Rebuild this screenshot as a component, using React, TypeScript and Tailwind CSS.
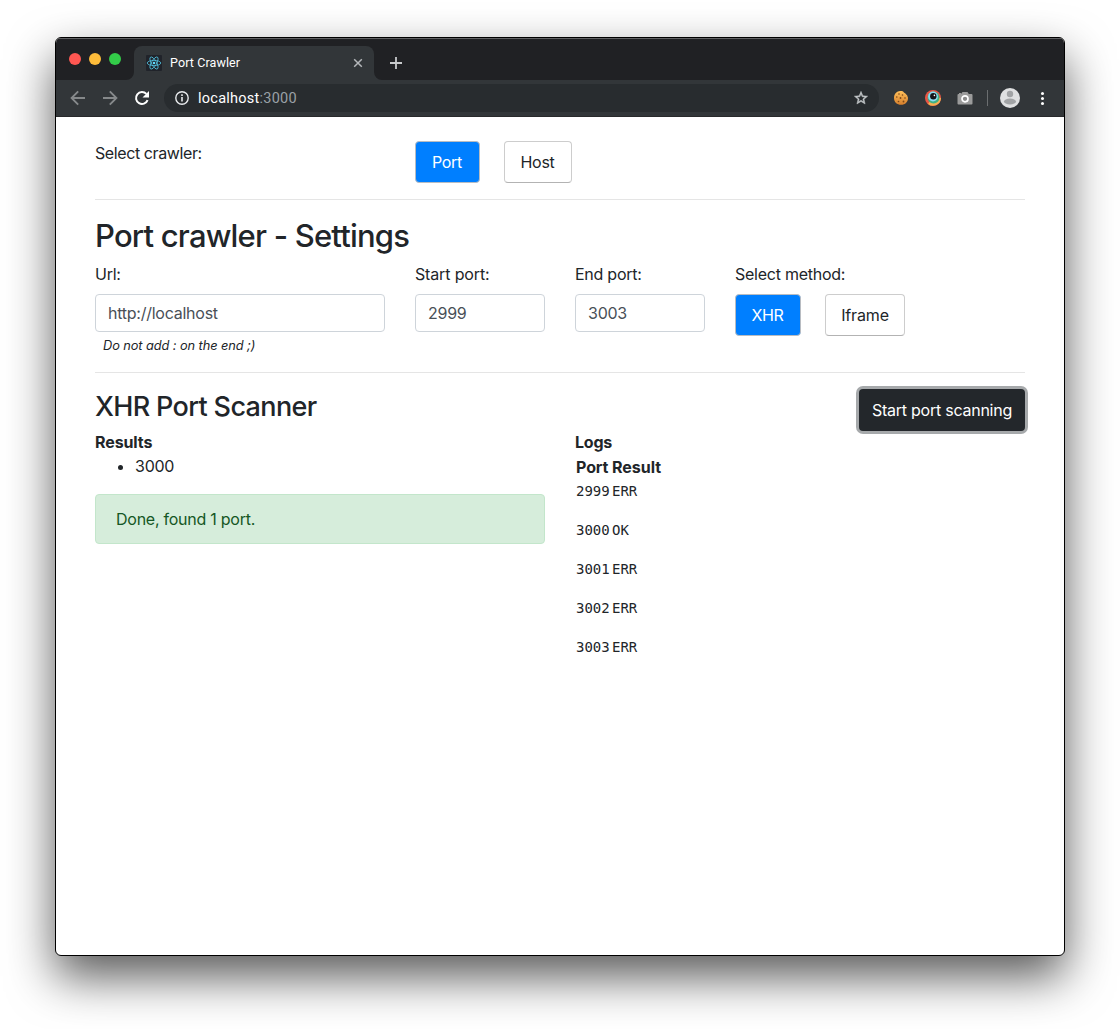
import React from "react";

const CONTENT_FONT = "font-['Inter',sans-serif]";

function Chrome() {
  return (
    <div className="font-['Roboto',sans-serif] text-white">
      <div className="flex h-[42px] items-end border-t border-[#606163] bg-[#202124]">
        <div className="mb-[15px] ml-[13px] flex gap-2">
          <span className="size-3 rounded-full bg-[#ff5752]" />
          <span className="size-3 rounded-full bg-[#febc3a]" />
          <span className="size-3 rounded-full bg-[#33cc49]" />
        </div>
        <svg className="ml-[5px] size-2" viewBox="0 0 8 8" fill="#323639"><path d="M8 0v8H0a8 8 0 0 0 8-8Z" /></svg>
        <div className="flex h-[34px] w-60 items-center rounded-t-lg bg-[#323639] pl-3 pr-[11px]">
          <svg className="size-4" viewBox="0 0 16 16">
            <rect width="16" height="16" rx="1" fill="#20232a" />
            <g fill="none" stroke="#53c1de" strokeWidth=".8">
              <ellipse cx="8" cy="8" rx="6.8" ry="2.6" />
              <ellipse cx="8" cy="8" rx="6.8" ry="2.6" transform="rotate(60 8 8)" />
              <ellipse cx="8" cy="8" rx="6.8" ry="2.6" transform="rotate(120 8 8)" />
            </g>
            <circle cx="8" cy="8" r="1.3" fill="#61dafb" />
          </svg>
          <span className="ml-2 text-[12.5px] leading-4 tracking-[0.1px]">Port Crawler</span>
          <svg className="ml-auto size-[10px]" viewBox="0 0 10 10" stroke="#b4b7ba" strokeWidth="1.5"><path d="M1.2 1.2l7.6 7.6M8.8 1.2L1.2 8.8" /></svg>
        </div>
        <svg className="size-2" viewBox="0 0 8 8" fill="#323639"><path d="M0 0v8h8a8 8 0 0 1-8-8Z" /></svg>
        <svg className="mb-[11px] ml-2 size-3" viewBox="0 0 12 12" stroke="#c8cacc" strokeWidth="1.8"><path d="M6 0v12M0 6h12" /></svg>
      </div>
      <div className="flex h-[37px] items-center border-b border-[#28292b] bg-[#323639] pl-[14px] pr-[15px]">
        <svg className="h-4 w-4" viewBox="0 0 16 16" fill="none" stroke="#85888a" strokeWidth="1.9"><path d="M15 8H2M8.2 1.4L1.6 8l6.6 6.6" /></svg>
        <svg className="ml-4 h-4 w-4" viewBox="0 0 16 16" fill="none" stroke="#85888a" strokeWidth="1.9"><path d="M1 8h13M7.8 1.4L14.4 8l-6.6 6.6" /></svg>
        <svg className="ml-4 h-4 w-4" viewBox="0 0 16 16"><path d="M13.6 10.2A6 6 0 1 1 12.4 3.9" fill="none" stroke="#fff" strokeWidth="2" /><path d="M15 1v6.5H8.5Z" fill="#fff" /></svg>
        <div className="ml-[14px] flex h-7 w-[715px] items-center rounded-full bg-[#282c2f] pl-[11px] pr-[10px]">
          <svg className="size-[14px]" viewBox="0 0 14 14"><circle cx="7" cy="7" r="6.2" fill="none" stroke="#e8eaed" strokeWidth="1.4" /><path d="M7 6v4.5M7 3.3v1.6" stroke="#e8eaed" strokeWidth="1.6" /></svg>
          <span className="ml-[9px] pt-0.5 text-[14.5px] leading-5 tracking-[0.25px]">localhost<span className="text-[#9aa0a6]">:3000</span></span>
          <svg className="ml-auto size-4" viewBox="0 0 24 24" fill="#c3c6c9" stroke="#c3c6c9" strokeWidth=".7"><path d="m22 9.24-7.19-.62L12 2 9.19 8.63 2 9.24l5.46 4.73L5.82 21 12 17.27 18.18 21l-1.63-7.03L22 9.24zM12 15.4l-3.76 2.27 1-4.28-3.32-2.88 4.38-.38L12 6.1l1.71 4.04 4.38.38-3.32 2.88 1 4.28L12 15.4z" /></svg>
        </div>
        <svg className="ml-[14px] size-4" viewBox="0 0 16 16">
          <defs>
            <linearGradient id="cookie" x2="0" y2="1"><stop stopColor="#ffc05a" /><stop offset="1" stopColor="#d67f2c" /></linearGradient>
          </defs>
          <path d="M6 1.2C3 1.8 1 4.5 1 8c0 4 3 6.8 7 6.8 4.5 0 7-3 7-6.8 0-1.2-.6-1.2-.8-2.4-.2-1-1.2-.8-1.6-1.8S11 3 10.5 1.9 7.5.9 6 1.2Z" fill="url(#cookie)" />
          <g fill="#7c4718"><circle cx="6" cy="4" r=".8" /><circle cx="9.5" cy="5" r=".8" /><circle cx="3.8" cy="7" r=".8" /><circle cx="7.5" cy="8" r=".9" /><circle cx="12" cy="8" r=".8" /><circle cx="5.5" cy="11.5" r=".8" /><circle cx="10.5" cy="11.5" r=".9" /></g>
        </svg>
        <svg className="ml-4 size-4" viewBox="0 0 16 16">
          <circle cx="8" cy="8" r="8" fill="#ea5545" /><path d="M3 14a8 8 0 0 0 13-6l-8-1Z" fill="#f4b052" />
          <circle cx="8.5" cy="7.5" r="6" fill="#3fb183" /><circle cx="8" cy="6.5" r="4.9" fill="#8ddcf2" /><circle cx="8.3" cy="6.3" r="3.2" fill="#151519" /><circle cx="9.4" cy="5.4" r=".8" fill="#fff" />
        </svg>
        <svg className="ml-4 size-4" viewBox="0 0 16 16">
          <path d="M5.5 2h5l1.3 2H14.5q1 0 1 1v8.5q0 1-1 1h-13q-1 0-1-1V5q0-1 1-1H2V3h2v1Z" fill="#9b9b9b" /><circle cx="8" cy="8.8" r="3" fill="#8c8c8c" stroke="#fff" strokeWidth="1.7" />
        </svg>
        <span className="ml-[14px] h-4 w-px bg-[#6b6e70]" />
        <svg className="ml-3 size-5" viewBox="0 0 20 20"><circle cx="10" cy="10" r="10" fill="#dfe0e1" /><circle cx="10" cy="6" r="3.2" fill="#a1a3a5" /><ellipse cx="10" cy="13.5" rx="6" ry="3" fill="#a1a3a5" /></svg>
        <svg className="ml-auto h-[14px] w-[14px]" viewBox="0 0 14 14" fill="#fff"><circle cx="7.5" cy="2.5" r="1.5" /><circle cx="7.5" cy="7.5" r="1.5" /><circle cx="7.5" cy="12.5" r="1.5" /></svg>
      </div>
    </div>
  );
}

function Choice({ active, width, children }: { active?: boolean; width: string; children: React.ReactNode }) {
  return (
    <button className={`${width} h-[42px] rounded border pr-px text-center leading-6 tracking-[-0.3px] ${active ? "border-[#b8bcc2] bg-[#007fff] text-white" : "border-[#cdcdcd] border-b-[#b3b3b3] bg-white text-[#212529]"}`}>
      {children}
    </button>
  );
}

const inputClass = "block h-[38px] w-full rounded border border-[#ced4da] bg-white px-3 text-[16px] tracking-[-0.25px] text-[#495057] outline-none";

const logs = [["2999", "ERR"], ["3000", "OK"], ["3001", "ERR"], ["3002", "ERR"], ["3003", "ERR"]];

export default function App() {
  return (
    <div className="h-[1029px] w-[1120px] overflow-hidden bg-white pl-[55px] pt-[37px]">
      <div className="h-[919px] w-[1010px] overflow-hidden rounded-md border border-black bg-white shadow-[0_21px_47px_rgba(0,0,0,0.65)]">
        <Chrome />
        <main className={`${CONTENT_FONT} px-[39px] pt-6 text-[16px] leading-6 tracking-[-0.25px] text-[#212529]`}>
          <section className="flex h-[58px]">
            <div className="w-80 tracking-[-0.4px]">Select crawler:</div>
            <div className="flex gap-6">
              <Choice active width="w-[65px]">Port</Choice>
              <Choice width="w-[68px]">Host</Choice>
            </div>
          </section>
          <hr className="border-[#e5e5e5]" />

          <section className="h-[172px] pt-4">
            <h2 className="h-[46px] text-[31px] font-medium leading-[39px] tracking-[-0.8px]">Port crawler - Settings</h2>
            <div className="flex gap-[30px]">
              <div className="w-[290px]">
                <label className="mb-2 block">Url:</label>
                <input className={inputClass} defaultValue="http://localhost" />
                <small className="block pl-2 pt-1 text-[12.8px] italic leading-5 tracking-[-0.08px]">Do not add : on the end ;)</small>
              </div>
              <div className="w-[130px]">
                <label className="mb-2 block tracking-[-0.15px]">Start port:</label>
                <input className={inputClass} defaultValue="2999" />
              </div>
              <div className="w-[130px]">
                <label className="mb-2 block">End port:</label>
                <input className={inputClass} defaultValue="3003" />
              </div>
              <div>
                <label className="mb-2 block">Select method:</label>
                <div className="flex gap-6">
                  <Choice active width="w-[66px]">XHR</Choice>
                  <Choice width="w-[80px]"><span className="pl-px tracking-[-0.15px]">Iframe</span></Choice>
                </div>
              </div>
            </div>
          </section>
          <hr className="border-[#e5e5e5]" />

          <section className="pt-[15px]">
            <div className="flex h-[42px] justify-between">
              <h3 className="pt-0.5 text-[27px] font-medium leading-[34px] tracking-[-0.65px]">XHR Port Scanner</h3>
              <button className="mt-px h-[42px] w-[166px] rounded bg-[#23272b] leading-6 tracking-[-0.25px] text-white shadow-[0_0_0_3px_#a6a9ab]">Start port scanning</button>
            </div>
            <div className="flex gap-[30px]">
              <div className="w-[450px]">
                <div className="font-bold tracking-[-0.1px]">Results</div>
                <ul className="mb-4 list-disc pl-10"><li>3000</li></ul>
                <div className="h-[50px] rounded border border-[#c3e6cb] bg-[#d6eddb] px-5 py-3 text-[#155724]">Done, found 1 port.</div>
              </div>
              <div>
                <div className="font-bold tracking-[-0.2px]">Logs</div>
                <div className="grid h-[27px] grid-cols-[35px_auto] gap-x-px px-px pt-px">
                  <b className="tracking-[-0.1px]">Port</b>
                  <b className="tracking-[0px]">Result</b>
                </div>
                {logs.map(([port, result]) => (
                  <div key={port} className="grid h-[39px] grid-cols-[35px_auto] gap-x-px px-px font-['DejaVu_Sans_Mono',monospace] text-[14px] leading-[21px] tracking-normal">
                    <span>{port}</span>
                    <span>{result}</span>
                  </div>
                ))}
              </div>
            </div>
          </section>
        </main>
      </div>
    </div>
  );
}
